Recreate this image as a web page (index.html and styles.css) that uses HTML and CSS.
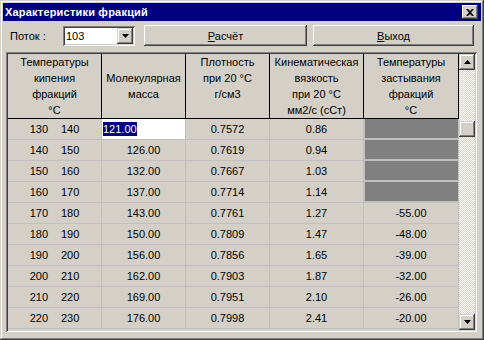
FILE: index.html
```html
<!DOCTYPE html>
<html lang="ru">

<head>
    <meta charset="UTF-8">
    <title>Характеристики фракций</title>
    <link rel="stylesheet" href="styles.css">
</head>

<body>
    <div class="window">
        <div class="titlebar">
            <span class="title">Характеристики фракций</span>
            <button class="close-btn">
                <svg width="8" height="7" viewBox="0 0 8 7">
                    <path d="M0 0h2l2 2 2-2h2L5 3.5 8 7H6L4 5 2 7H0l3-3.5z" fill="#000"/>
                </svg>
            </button>
        </div>

        <div class="toolbar">
            <span class="label">Поток :</span>
            <div class="combo">
                <span class="combo-text">103</span>
                <span class="combo-btn">
                    <svg width="7" height="4" viewBox="0 0 7 4"><path d="M0 0h7L3.5 4z" fill="#000"/></svg>
                </span>
            </div>
            <button class="btn btn-calc"><u>Р</u>асчёт</button>
            <button class="btn btn-exit"><u>В</u>ыход</button>
        </div>

        <div class="grid">
            <div class="grid-body">
                <table class="table">
                    <colgroup>
                        <col style="width:94px">
                        <col style="width:84px">
                        <col style="width:84px">
                        <col style="width:94px">
                        <col>
                    </colgroup>
                    <thead>
                        <tr>
                            <th>Температуры<br>кипения<br>фракций<br>°С</th>
                            <th class="th-mid">Молекулярная<br>масса</th>
                            <th>Плотность<br>при 20 °С<br>г/см3</th>
                            <th>Кинематическая<br>вязкость<br>при 20 °С<br>мм2/с (сСт)</th>
                            <th>Температуры<br>застывания<br>фракций<br>°С</th>
                        </tr>
                    </thead>
                    <tbody class="rows"></tbody>
                </table>
            </div>
            <div class="scrollbar">
                <div class="sb-btn">
                    <svg width="7" height="4" viewBox="0 0 7 4"><path d="M3.5 0L7 4H0z" fill="#000"/></svg>
                </div>
                <div class="sb-track">
                    <div class="sb-thumb"></div>
                </div>
                <div class="sb-btn">
                    <svg width="7" height="4" viewBox="0 0 7 4"><path d="M0 0h7L3.5 4z" fill="#000"/></svg>
                </div>
            </div>
        </div>
    </div>

    <script>
        // фракции: начало, конец, масса, плотность, вязкость, застывание
        let fractions = [
            [130, 140, '121.00', '0.7572', '0.86', ''],
            [140, 150, '126.00', '0.7619', '0.94', ''],
            [150, 160, '132.00', '0.7667', '1.03', ''],
            [160, 170, '137.00', '0.7714', '1.14', ''],
            [170, 180, '143.00', '0.7761', '1.27', '-55.00'],
            [180, 190, '150.00', '0.7809', '1.47', '-48.00'],
            [190, 200, '156.00', '0.7856', '1.65', '-39.00'],
            [200, 210, '162.00', '0.7903', '1.87', '-32.00'],
            [210, 220, '169.00', '0.7951', '2.10', '-26.00'],
            [220, 230, '176.00', '0.7998', '2.41', '-20.00'],
        ];

        let rows = document.querySelector('.rows');

        fractions.forEach((f, index) => {
            let massCell = index == 0
                ? `<td class="edit"><span class="sel">${f[2]}</span></td>`
                : `<td>${f[2]}</td>`;
            let freezeCell = f[5] == ''
                ? `<td class="blank"></td>`
                : `<td>${f[5]}</td>`;

            rows.innerHTML += `
            <tr>
                <td><span class="range"><span>${f[0]}</span><span>${f[1]}</span></span></td>
                ${massCell}
                <td>${f[3]}</td>
                <td>${f[4]}</td>
                ${freezeCell}
            </tr>`;
        });

        // кусочек следующей строки внизу
        rows.innerHTML += `<tr class="part"><td></td><td></td><td></td><td></td><td></td></tr>`;
    </script>
</body>

</html>
```

FILE: styles.css
```css
* {
    box-sizing: border-box;
}

body {
    margin: 0;
    padding: 0;
    font-family: "Liberation Sans", Arial, sans-serif;
    font-size: 11px;
    color: #000;
}

.window {
    width: 484px;
    height: 340px;
    padding: 3px;
    background-color: #d4d0c8;
    box-shadow: inset -1px -1px #404040, inset 1px 1px #d4d0c8,
        inset -2px -2px #808080, inset 2px 2px #fff;
    display: flex;
    flex-direction: column;
}

.titlebar {
    height: 18px;
    background-color: #000080;
    display: flex;
    align-items: center;
    justify-content: space-between;
    padding-left: 2px;
    padding-right: 3px;
}

.title {
    color: #fff;
    font-weight: bold;
    font-size: 11px;
    letter-spacing: 0.2px;
}

.close-btn {
    width: 16px;
    height: 14px;
    padding: 0;
    border: none;
    background-color: #d4d0c8;
    box-shadow: inset -1px -1px #404040, inset 1px 1px #fff,
        inset -2px -2px #808080, inset 2px 2px #d4d0c8;
    display: flex;
    align-items: center;
    justify-content: center;
}

.toolbar {
    height: 29px;
    display: flex;
    align-items: center;
    padding-left: 7px;
}

.label {
    width: 53px;
}

.combo {
    width: 72px;
    height: 20px;
    background-color: #fff;
    box-shadow: inset 1px 1px #808080, inset -1px -1px #fff,
        inset 2px 2px #404040, inset -2px -2px #d4d0c8;
    display: flex;
    align-items: center;
    justify-content: space-between;
    padding: 2px;
}

.combo-text {
    padding-left: 1px;
}

.combo-btn {
    width: 16px;
    height: 16px;
    background-color: #d4d0c8;
    box-shadow: inset -1px -1px #404040, inset 1px 1px #d4d0c8,
        inset -2px -2px #808080, inset 2px 2px #fff;
    display: flex;
    align-items: center;
    justify-content: center;
}

.btn {
    height: 21px;
    padding: 0;
    border: none;
    font-family: "Liberation Sans", Arial, sans-serif;
    font-size: 11px;
    color: #000;
    background-color: #d4d0c8;
    box-shadow: inset -1px -1px #404040, inset 1px 1px #fff,
        inset -2px -2px #808080, inset 2px 2px #d4d0c8;
}

.btn-calc {
    width: 163px;
    margin-left: 9px;
}

.btn-exit {
    width: 161px;
    margin-left: 6px;
}

.grid {
    height: 280px;
    margin: 2px 4px 0 3px;
    padding: 2px;
    box-shadow: inset 1px 1px #808080, inset -1px -1px #fff,
        inset 2px 2px #404040, inset -2px -2px #d4d0c8;
    display: flex;
}

.grid-body {
    flex: 1;
    overflow: hidden;
}

.table {
    width: 100%;
    table-layout: fixed;
    border-collapse: separate;
    border-spacing: 0;
}

.table th {
    height: 63px;
    padding: 0;
    font-weight: normal;
    line-height: 16px;
    vertical-align: top;
    border-right: 1px solid #000;
    border-bottom: 1px solid #000;
    white-space: nowrap;
}

.table th.th-mid {
    padding-top: 16px;
}

.table td {
    height: 20px;
    padding: 0;
    text-align: center;
    line-height: 20px;
    border-right: 1px solid #c0c0c0;
    border-bottom: 1px solid #c0c0c0;
}

.range {
    display: flex;
    justify-content: center;
    gap: 13px;
}

.table td.edit {
    background-color: #fff;
    text-align: left;
    padding-left: 1px;
}

.sel {
    background-color: #000080;
    color: #fff;
    padding: 1px 0;
}

.table td.blank {
    background-color: #808080;
    border-left: 1px solid #c0c0c0;
    border-bottom-width: 2px;
    height: 19px;
}

.part td {
    height: 2px;
    border-bottom: none;
}

.scrollbar {
    width: 16px;
    display: flex;
    flex-direction: column;
}

.sb-btn {
    height: 16px;
    background-color: #d4d0c8;
    box-shadow: inset -1px -1px #404040, inset 1px 1px #d4d0c8,
        inset -2px -2px #808080, inset 2px 2px #fff;
    display: flex;
    align-items: center;
    justify-content: center;
}

.sb-track {
    flex: 1;
    background-image: conic-gradient(#fff 25%, #d4d0c8 0 50%, #fff 0 75%, #d4d0c8 0);
    background-size: 2px 2px;
}

.sb-thumb {
    height: 16px;
    margin-top: 51px;
    background-color: #d4d0c8;
    box-shadow: inset -1px -1px #404040, inset 1px 1px #d4d0c8,
        inset -2px -2px #808080, inset 2px 2px #fff;
}
```
